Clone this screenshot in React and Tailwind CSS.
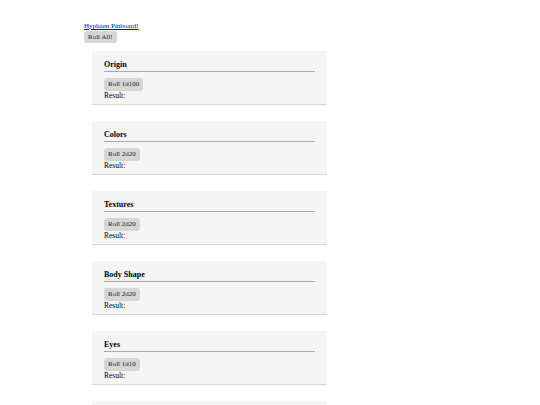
import React from "react";

const cards = [
  { title: "Origin", roll: "Roll 1d100" },
  { title: "Colors", roll: "Roll 2d20" },
  { title: "Textures", roll: "Roll 2d20" },
  { title: "Body Shape", roll: "Roll 2d20" },
  { title: "Eyes", roll: "Roll 1d10" },
  { title: "Mouth", roll: "Roll 1d10" },
];

export default function App() {
  return (
    <div
      className="h-[405px] overflow-hidden bg-white pl-[84px] pt-[22px] text-black"
      style={{ fontFamily: '"Liberation Serif", "Times New Roman", serif' }}
    >
      <a href="#" className="block text-[7px] leading-[9px] text-[#0000ee] underline">
        Hyphaen Pinboard!
      </a>
      <button className="block h-[12px] rounded-[3px] bg-[#d6d6d6] px-[4px] text-[7px] leading-[12px] text-[#222]">
        Roll All!
      </button>
      <div className="mt-[8px] flex flex-col gap-[16px]">
        {cards.map((c) => (
          <div
            key={c.title}
            className="ml-[8px] w-[235px] border-b border-[#d6d6d6] bg-[#f5f5f5] pl-[12px] pr-[12px] pt-[9px] pb-[3px]"
          >
            <div className="border-b border-[#aaaaaa] pb-[1px] text-[8px] font-bold leading-[10px]">
              {c.title}
            </div>
            <button className="mt-[6px] block h-[13px] rounded-[3px] bg-[#d6d6d6] px-[4px] text-[7px] leading-[13px] text-[#222]">
              {c.roll}
            </button>
            <div className="text-[7.5px] leading-[10px]">Result:</div>
          </div>
        ))}
      </div>
    </div>
  );
}
